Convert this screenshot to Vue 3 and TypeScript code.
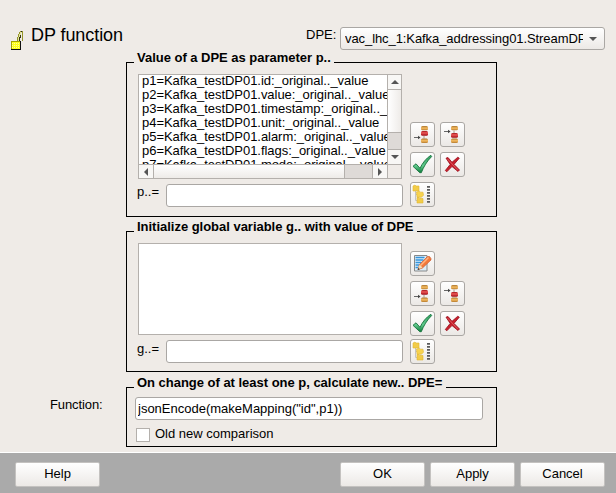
<script setup lang="ts">
import { ref } from 'vue'

type IconName = 'before' | 'after' | 'check' | 'cross' | 'tree' | 'edit'

const rows: string[] = ['id', 'value', 'timestamp', 'unit', 'alarm', 'flags', 'mode'].map(
  (field, i) => `p${i + 1}=Kafka_testDP01.${field}:_original.._value`,
)
const paramButtons: IconName[] = ['before', 'after', 'check', 'cross', 'tree']
const globalButtons: IconName[] = ['edit', 'before', 'after', 'check', 'cross', 'tree']
const param = ref('')
const globalVar = ref('')
const expression = ref('jsonEncode(makeMapping("id",p1))')
const compare = ref(false)
</script>

<template>
  <svg class="defs" width="0" height="0">
    <defs>
      <linearGradient id="gold" x2="0" y2="1">
        <stop offset="0" stop-color="#a9752f" /><stop offset=".5" stop-color="#f7bd62" /><stop offset="1" stop-color="#b57a2c" />
      </linearGradient>
      <linearGradient id="red" x2="0" y2="1">
        <stop offset="0" stop-color="#a3141a" /><stop offset=".4" stop-color="#ee5a58" /><stop offset="1" stop-color="#9d0a12" />
      </linearGradient>
      <linearGradient id="green" x2="0" y2="1">
        <stop offset="0" stop-color="#2f9e5f" /><stop offset=".6" stop-color="#62cb8e" /><stop offset="1" stop-color="#0d7b3a" />
      </linearGradient>
      <symbol id="before" viewBox="0 0 23 23">
        <rect x="10" y="3" width="7" height="4.300" rx="1.500" fill="url(#gold)" />
        <rect x="10" y="8" width="7" height="4.700" rx="1.500" fill="url(#red)" />
        <path d="M13 13v2.500" stroke="#a89888" />
        <rect x="10" y="15.500" width="7" height="4.500" rx="1.500" fill="url(#gold)" />
        <path d="M3 14.500h6" stroke="#666" /><path d="M7 12.700l2.500 1.800L7 16.300z" fill="#444" />
      </symbol>
      <symbol id="after" viewBox="0 0 23 23">
        <rect x="10" y="3" width="7" height="4.300" rx="1.500" fill="url(#gold)" />
        <path d="M13 7.500v2.500" stroke="#a89888" />
        <rect x="10" y="10" width="7" height="4.700" rx="1.500" fill="url(#red)" />
        <rect x="10" y="15.500" width="7" height="4.500" rx="1.500" fill="url(#gold)" />
        <path d="M3 8.500h6" stroke="#666" /><path d="M7 6.700l2.500 1.800L7 10.300z" fill="#444" />
      </symbol>
      <symbol id="check" viewBox="0 0 23 23">
        <path d="M2 13.300L5 10.800 9 15.300C11.500 10 15 5.500 19.800 2.300L20.700 3.500C16 8 12.500 14 10.300 19.700H8.800Z" fill="url(#green)" stroke="#16733c" stroke-width=".9" />
      </symbol>
      <symbol id="cross" viewBox="0 0 23 23">
        <path d="M5 5.200L7 4.500 11 9.300 16.800 4.200 18.300 5.200 13 11.400 18.500 17 17 18.500 11 13.500 5.800 18.800 4.300 17.500 9.200 11.400Z" fill="#c9202c" stroke="#970d1b" stroke-width=".8" />
        <path d="M6.500 6L16.700 17" stroke="#e0656b" stroke-width=".8" />
      </symbol>
      <symbol id="tree" viewBox="0 0 23 23">
        <path d="M4.500 7v10.500H7M4.500 11.500H8" fill="none" stroke="#c4c4c4" />
        <path d="M2 3l2-1 1 1h3v5H2z" fill="#f2cc48" stroke="#dfb633" stroke-width=".6" />
        <path d="M5.500 9l3-.8 1 1 2.500 0 .5 3-2 2H6z" fill="#f7d34f" stroke="#dfb633" stroke-width=".6" />
        <path d="M6 14.500h2l1 1h3v4.500H6z" fill="#f2cc48" stroke="#dfb633" stroke-width=".6" />
        <path d="M17.500 3v17" stroke="#5a5a5a" stroke-width="3" stroke-dasharray="1.800 1.200" />
      </symbol>
      <symbol id="edit" viewBox="0 0 23 23">
        <path d="M3.500 3.500h12.500v15.500H3.500z" fill="#dcedf8" stroke="#888" />
        <path d="M4.500 5.500h9M4.500 8h8M4.500 10.500h6M4.500 13h4M4.500 15.500h3" stroke="#3695db" stroke-width="1.400" />
        <path d="M7 17.500l1.500-5 8-8h2l1.500 2v1.500l-8.500 8z" fill="#f37a3b" stroke="#c95226" stroke-width=".6" />
        <path d="M9.500 13.500l8-8" stroke="#ffb584" stroke-width="1.500" />
        <path d="M7 17.500l1.500-5 3 3z" fill="#f5dcb2" /><path d="M6.500 18l1-2 1.300 1.200z" fill="#222" />
      </symbol>
    </defs>
  </svg>

  <div class="dialog">
    <header class="head">
      <svg class="lock" width="13" height="19" viewBox="0 0 13 19" shape-rendering="crispEdges">
        <path d="M6.500 10V6.500h1v-3h1v-2h1v-1h2" fill="none" stroke="#96962a" />
        <path d="M7.500 10V6.500h1v-3h1v-2h1" fill="none" stroke="#e4e4a0" />
        <path d="M8.500 10V6.500h1v-3" fill="none" stroke="#33330f" />
        <path d="M11.500 1v9" stroke="#96962a" /><path d="M10 .5h1" stroke="#222" />
        <rect x="0" y="10" width="10" height="9" fill="#111" />
        <rect x="0" y="10" width="9" height="8" fill="#a3a300" />
        <rect x="1" y="11" width="8" height="7" fill="#ffff18" />
        <path d="M1 12.500h8M1 14.500h8M1 16.500h8" stroke="#ffff9a" stroke-dasharray="1 1" />
      </svg>
      <h1>DP function</h1>
      <span class="dpe-label">DPE:</span>
      <div class="combo">
        <span class="combo-text">vac_lhc_1:Kafka_addressing01.StreamDPE</span>
        <svg width="8" height="4" viewBox="0 0 8 4"><path d="M0 0h8L4 4z" fill="#555" /></svg>
      </div>
    </header>

    <section class="group params">
      <div class="caption"><h2 class="t1">Value of a DPE as parameter p..</h2></div>
      <div class="body">
        <div class="left">
          <div class="list scrolling">
            <div class="rows"><div v-for="row in rows" :key="row">{{ row }}</div></div>
            <div class="vbar">
              <i class="btn"><svg width="8" height="4"><path d="M0 4h8L4 0z" fill="#555" /></svg></i>
              <i class="thumb"></i><i class="groove"></i>
              <i class="btn"><svg width="8" height="4"><path d="M0 0h8L4 4z" fill="#555" /></svg></i>
            </div>
            <div class="hbar">
              <i class="btn"><svg width="4" height="8"><path d="M4 0v8L0 4z" fill="#555" /></svg></i>
              <i class="thumb"></i><i class="groove"></i>
              <i class="btn"><svg width="4" height="8"><path d="M0 0v8l4-4z" fill="#555" /></svg></i>
            </div>
            <div class="corner"></div>
          </div>
          <label class="entry"><span>p..=</span><input v-model="param" /></label>
        </div>
        <div class="tools">
          <button v-for="name in paramButtons" :key="name" :class="name"><svg width="23" height="23"><use :href="'#' + name" /></svg></button>
        </div>
      </div>
    </section>

    <section class="group globals">
      <div class="caption"><h2 class="t2">Initialize global variable g.. with value of DPE</h2></div>
      <div class="body">
        <div class="left">
          <div class="list"></div>
          <label class="entry"><span>g..=</span><input v-model="globalVar" /></label>
        </div>
        <div class="tools">
          <button v-for="name in globalButtons" :key="name" :class="name"><svg width="23" height="23"><use :href="'#' + name" /></svg></button>
        </div>
      </div>
    </section>

    <div class="function-row">
      <span class="function-label">Function:</span>
      <section class="group calc">
        <div class="caption"><h2 class="t3">On change of at least one p, calculate new.. DPE=</h2></div>
        <input v-model="expression" class="expr" />
        <label class="compare"><input v-model="compare" type="checkbox" /><span>Old new comparison</span></label>
      </section>
    </div>

    <footer class="foot">
      <button class="help">Help</button>
      <button>OK</button>
      <button>Apply</button>
      <button>Cancel</button>
    </footer>
  </div>
</template>

<style>
body { overflow: hidden; background: #efebe7; }
</style>

<style scoped>
* { box-sizing: border-box; }
.defs { position: absolute; }
.dialog { width: 616px; height: 493px; display: flex; flex-direction: column; background: #efebe7; color: #000; font: 13px/16px "Liberation Sans", Arial, sans-serif; }
.head { height: 62px; flex: none; display: flex; align-items: flex-start; padding-left: 11px; }
.lock { margin-top: 31px; }
h1 { margin: 25px 0 0 7px; width: 275px; font-size: 18px; line-height: 20px; font-weight: 400; letter-spacing: -.07px; }
.dpe-label { margin-top: 27px; width: 34px; }
.combo { margin-top: 27px; width: 265px; height: 23px; display: flex; align-items: center; gap: 6px; padding-left: 4px; border: 1px solid #aaa7a4; border-radius: 3px; background: linear-gradient(#fff, #ece9e6); }
.combo-text { width: 238px; overflow: hidden; white-space: nowrap; letter-spacing: -.08px; }
.group { width: 371px; flex: none; border: solid #000; border-width: 0 1px 1px; }
.params, .globals { margin-left: 126px; }
.params { height: 155px; }
.globals { height: 141px; margin-top: 14px; }
.calc { height: 60px; }
.caption { display: flex; height: 12px; }
.caption::before, .caption::after { content: ""; border-top: 1px solid #000; }
.caption::before { width: 7px; }
.caption::after { flex: 1; }
h2 { margin: -12px 3px 0; font-size: 13px; line-height: 16px; white-space: nowrap; letter-spacing: -.02px; }
.t1 { width: 194px; }
.t2 { width: 277px; }
.t3 { width: 306px; }
.body { display: flex; padding-left: 10px; }
.left { width: 273px; }
.list { width: 264px; height: 92px; margin-left: 1px; border: 1px solid #b4b0ac; background: #fff; }
.list.scrolling { height: 105px; display: grid; grid-template: 89px 14px / 248px 14px; }
.rows { overflow: hidden; padding-left: 3px; line-height: 14px; margin-top: -1px; white-space: nowrap; letter-spacing: -.04px; }
.vbar, .hbar { display: flex; border: 0 solid #b4b0ac; }
.vbar { flex-direction: column; border-left-width: 1px; }
.hbar { border-top-width: 1px; }
.corner { border: solid #b4b0ac; border-width: 1px 0 0 1px; background: #efebe7; }
.btn { flex: none; display: flex; align-items: center; justify-content: center; background: #f8f7f5; }
.vbar .btn { height: 14px; }
.hbar .btn { width: 14px; }
.thumb { flex: 1; background: linear-gradient(#fff, #eeebe8); border: 0 solid #b4b0ac; }
.vbar .thumb { background: linear-gradient(90deg, #fff, #eeebe8); border-width: 1px 0; }
.hbar .thumb { border-width: 0 1px; }
.groove { background: #dedad7; border: 0 solid #b4b0ac; }
.vbar .groove { height: 17px; border-bottom-width: 1px; }
.hbar .groove { width: 28px; border-right-width: 1px; }
.entry { display: flex; margin-top: 5px; }
.entry span { width: 29px; }
input { display: block; font: inherit; color: #000; margin: 0; outline: 0; height: 23px; padding: 0 2px 1px; border: 1px solid #aaa7a4; border-radius: 3px; background: #fff; }
.entry input { width: 237px; }
.globals .entry span { padding-top: 1px; }
.tools { display: grid; grid-template-columns: 25px 25px; gap: 5px; align-content: start; }
.params .tools { margin-top: 48px; }
.globals .tools { margin-top: 8px; }
.tools button { width: 25px; height: 25px; padding: 0; border: 1px solid #aaa7a4; border-radius: 3px; background: linear-gradient(#fff, #ebe8e5); }
.tools svg { display: block; }
.edit, .tree { grid-column: 1 / 3; }
.globals .tree { margin-top: -2px; }
.function-row { display: flex; margin-top: 15px; height: 65px; flex: none; }
.function-label { width: 126px; padding: 10px 0 0 50px; letter-spacing: -.1px; }
.calc .caption { height: 10px; }
.expr { width: 348px; margin-left: 8px; }
.compare { display: flex; margin: 6px 0 0 9px; }
.compare input { appearance: none; width: 14px; height: 14px; margin: 2px 5px 0 0; padding: 0; border-radius: 0; border-color: #b4b0ac; }
.foot { flex: 1; display: flex; gap: 5px; padding: 9px 0 0 15px; border-top: 1px solid #fff; background: #aaa; }
.foot button { width: 85px; height: 25px; padding: 0 0 2px; border: 1px solid #c4c2c0; border-radius: 2px; background: linear-gradient(#fff, #ece9e6); color: #000; font: inherit; }
.foot .help { margin-right: 235px; }
</style>
